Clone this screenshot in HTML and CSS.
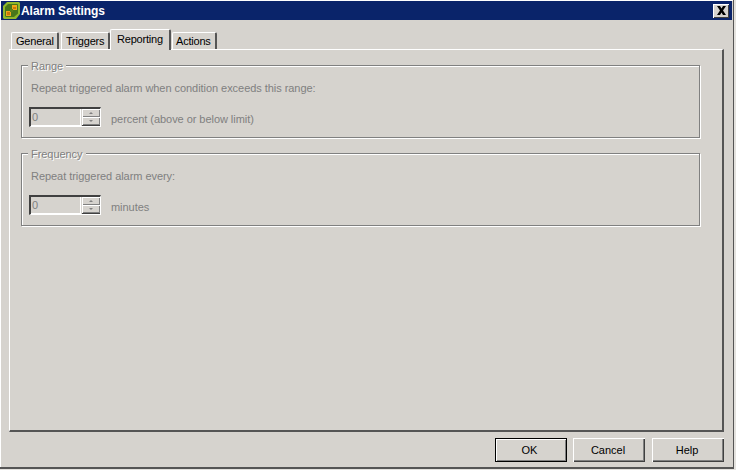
FILE: index.html
```html
<!DOCTYPE html>
<html lang="en">
<head>
<meta charset="utf-8">
<title>Alarm Settings</title>
<link rel="stylesheet" href="styles.css">
</head>
<body>
<div class="window">
  <div class="titlebar">
    <svg class="app-icon" width="17" height="17" viewBox="0 0 17 17">
      <path d="M4 0h12l1 1v11l-4 5H1l-1-1V4z" fill="#8fb82a"/>
      <path d="M5 2h9.500l.5.500v9L11 15H3l-1-1V5z" fill="#47761a"/>
      <path d="M9 3h5v5H9z" fill="#f0a818"/>
      <path d="M3 9h5v5H3z" fill="#f0a818"/>
      <path d="M7 7h3v3H7z" fill="#5c7f1a"/>
      <path d="M10 5h3v2h-3zM4 10h3v3H4z" fill="#c8780c"/>
    </svg>
    <span class="title">Alarm Settings</span>
    <button class="close" aria-label="Close">
      <svg width="11" height="9" viewBox="0 0 11 9"><path d="M1 0h3l1.500 2.500L7 0h3L7 4.500 10 9H7L5.500 6.500 4 9H1l3-4.500z" fill="#000"/></svg>
    </button>
  </div>
  <div class="content">
    <div class="tabs">
      <div class="tab t1">General</div>
      <div class="tab t2">Triggers</div>
      <div class="tab t3 active">Reporting</div>
      <div class="tab t4">Actions</div>
    </div>
    <div class="panel">
      <section class="group">
        <div class="legend">Range</div>
        <p class="desc">Repeat triggered alarm when condition exceeds this range:</p>
        <div class="row">
          <div class="spinner">
            <div class="spin-input">0</div>
            <div class="spin-btns">
              <div class="spin-btn"><i class="arrow up"></i></div>
              <div class="spin-btn"><i class="arrow down"></i></div>
            </div>
          </div>
          <span class="unit">percent (above or below limit)</span>
        </div>
      </section>
      <section class="group">
        <div class="legend">Frequency</div>
        <p class="desc">Repeat triggered alarm every:</p>
        <div class="row">
          <div class="spinner">
            <div class="spin-input">0</div>
            <div class="spin-btns">
              <div class="spin-btn"><i class="arrow up"></i></div>
              <div class="spin-btn"><i class="arrow down"></i></div>
            </div>
          </div>
          <span class="unit">minutes</span>
        </div>
      </section>
    </div>
    <div class="footer">
      <button class="btn default">OK</button>
      <button class="btn">Cancel</button>
      <button class="btn">Help</button>
    </div>
  </div>
</div>
</body>
</html>
```

FILE: styles.css
```css
* { box-sizing: border-box; }
html, body { margin: 0; padding: 0; }
body {
  width: 736px;
  height: 470px;
  overflow: hidden;
  background: #e4e2de;
  font-family: "Liberation Sans", Arial, sans-serif;
  font-size: 11px;
  letter-spacing: -0.05px;
  color: #000;
}
.window {
  width: 734px;
  height: 469px;
  background: #d6d3ce;
  border-right: 1px solid #555;
  border-bottom: 2px solid #555;
  box-shadow: inset 1px 1px 0 #fff;
  padding: 1px 1px 0 1px;
  display: flex;
  flex-direction: column;
}
.titlebar {
  height: 19px;
  background: #0a246a;
  color: #fff;
  display: flex;
  align-items: center;
  padding: 0 3px 0 2px;
}
.app-icon { flex: none; margin-right: 1px; }
.title { font-weight: 700; font-size: 12px; flex: 1; }
.close {
  width: 16px;
  height: 14px;
  padding: 0;
  background: #d6d3ce;
  border: 0;
  box-shadow: inset 1px 1px 0 #fff, inset -1px -1px 0 #404040;
  display: flex;
  align-items: center;
  justify-content: center;
}
.content {
  flex: 1;
  display: flex;
  flex-direction: column;
  padding: 9px 8px 0 8px;
}
.tabs {
  display: flex;
  height: 21px;
  align-items: flex-end;
  padding-left: 2px;
  position: relative;
  z-index: 1;
  margin-bottom: -1px;
  letter-spacing: -0.2px;
}
.tab {
  height: 17px;
  padding: 2px 0 0 4px;
  background: #d6d3ce;
  border-left: 1px solid #fff;
  border-top: 1px solid #fff;
  border-right: 2px solid #555;
  border-top-left-radius: 2px;
  border-top-right-radius: 2px;
  white-space: nowrap;
  color: #000;
  margin-bottom: 1px;
}
.t1 { width: 48px; margin-right: 2px; }
.t2 { width: 49px; }
.t3 { width: 61px; }
.t4 { width: 45px; margin-left: 1px; padding-left: 3px; }
.tab.active {
  height: 21px;
  margin-bottom: 0;
  padding: 3px 0 0 6px;
}
.panel {
  height: 383px;
  background: #d6d3ce;
  border-left: 1px solid #fff;
  border-top: 1px solid #fff;
  border-right: 2px solid #555;
  border-bottom: 2px solid #555;
  padding: 15px 22px 0 11px;
}
.group {
  position: relative;
  height: 73px;
  margin-bottom: 15px;
  border: 1px solid #808080;
  box-shadow: inset 1px 1px 0 #fff, 1px 1px 0 #fff;
  padding: 14px 7px 0 7px;
}
.legend {
  position: absolute;
  left: 6px;
  top: -7px;
  padding: 0 3px;
  background: #d6d3ce;
  line-height: 14px;
  color: #808080;
  text-shadow: 1px 1px 0 #fff;
}
.desc {
  margin: 0 0 0 2px;
  line-height: 16px;
  color: #808080;
}
.row {
  display: flex;
  align-items: center;
  margin-top: 11px;
}
.spinner {
  width: 72px;
  height: 20px;
  display: flex;
  border-top: 2px solid #404040;
  border-left: 2px solid #404040;
  border-right: 1px solid #fff;
  border-bottom: 1px solid #fff;
}
.spin-input {
  width: 51px;
  line-height: 16px;
  padding-left: 1px;
  color: #808080;
  border-right: 1px solid #fff;
  border-bottom: 1px solid #fff;
}
.spin-btns {
  width: 18px;
  display: flex;
  flex-direction: column;
  margin-left: 1px;
  border-bottom: 1px solid #404040;
}
.spin-btn {
  flex: 1;
  background: #d6d3ce;
  box-shadow: inset 1px 1px 0 #fff, inset -1px -1px 0 #808080;
  display: flex;
  align-items: center;
  justify-content: center;
}
.arrow { display: block; width: 0; height: 0; border-left: 2px solid transparent; border-right: 2px solid transparent; }
.arrow.up { border-bottom: 2px solid #808080; }
.arrow.down { border-top: 2px solid #808080; }
.unit { margin-left: 10px; padding-top: 4px; color: #808080; }
.footer {
  flex: 1;
  display: flex;
  justify-content: flex-end;
  gap: 7px;
  padding: 6px 0 0 0;
}
.btn {
  width: 72px;
  height: 24px;
  padding: 0 2px 0 0;
  background: #d6d3ce;
  border: 0;
  box-shadow: inset 1px 1px 0 #fff, inset -1px -1px 0 #404040, inset -2px -2px 0 #808080;
  font: inherit;
  color: #000;
}
.btn.default {
  margin-right: -1px;
  padding-right: 3px;
  box-shadow: inset 0 0 0 1px #000, inset 2px 2px 0 #fff, inset -2px -2px 0 #808080;
}
```
